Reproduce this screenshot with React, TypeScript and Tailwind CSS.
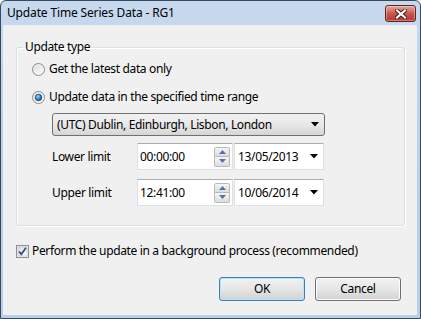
import React from "react";

const font = { fontFamily: '"Noto Sans", "Open Sans", Arial, sans-serif' };

function Radio({ checked }: { checked?: boolean }) {
  return (
    <svg width="13" height="13" viewBox="0 0 13 13" className="shrink-0">
      <defs>
        <linearGradient id={checked ? "rg-on" : "rg-off"} x1="0" y1="0" x2="1" y2="1">
          <stop offset="0" stopColor="#d9d9d9" />
          <stop offset="1" stopColor="#ffffff" />
        </linearGradient>
        <radialGradient id="dot" cx="0.4" cy="0.35" r="0.7">
          <stop offset="0" stopColor="#9fd5f5" />
          <stop offset="0.6" stopColor="#2b7fc4" />
          <stop offset="1" stopColor="#0e4a86" />
        </radialGradient>
      </defs>
      <circle cx="6.5" cy="6.5" r="6" fill={`url(#${checked ? "rg-on" : "rg-off"})`} stroke="#8a8a8a" />
      <circle cx="6.5" cy="6.5" r="4.5" fill="none" stroke="#f4f4f4" />
      {checked && <circle cx="6.5" cy="6.5" r="3.3" fill="url(#dot)" stroke="#1b3f6a" strokeWidth="0.7" />}
    </svg>
  );
}

function Arrow() {
  return (
    <svg width="8" height="5" viewBox="0 0 8 5" className="shrink-0">
      <path d="M0 0 H8 L4 4.5 Z" fill="#000" />
    </svg>
  );
}

function Spinner() {
  return (
    <div className="flex flex-col w-[16px] mr-[2px]">
      <div className="h-[10px] border border-[#b9b9b9] bg-gradient-to-b from-[#f6f6f6] to-[#dcdcdc] flex items-center justify-center rounded-t-[2px]">
        <svg width="7" height="4" viewBox="0 0 7 4">
          <path d="M0 4 L3.5 0 L7 4 Z" fill="#5573a8" />
        </svg>
      </div>
      <div className="h-[10px] border border-t-0 border-[#b9b9b9] bg-gradient-to-b from-[#f6f6f6] to-[#dcdcdc] flex items-center justify-center rounded-b-[2px]">
        <svg width="7" height="4" viewBox="0 0 7 4">
          <path d="M0 0 L7 0 L3.5 4 Z" fill="#5573a8" />
        </svg>
      </div>
    </div>
  );
}

function LimitRow({ label, time, date, className }: { label: string; time: string; date: string; className?: string }) {
  return (
    <div className={"flex items-center h-[27px] " + (className ?? "")}>
      <div className="w-[85px] ml-[20px]">{label}</div>
      <div className="w-[96px] h-full bg-white border border-[#dde1e6] border-t-[#abadb3] flex items-center justify-between pl-[2px]">
        <span>{time}</span>
        <Spinner />
      </div>
      <div className="w-[90px] h-full ml-[1px] bg-white border border-[#dde1e6] border-t-[#abadb3] flex items-center justify-between pl-[3px] pr-[5px]">
        <span>{date}</span>
        <Arrow />
      </div>
    </div>
  );
}

export default function App() {
  return (
    <div
      className="w-[421px] h-[319px] flex flex-col rounded-t-[6px] border border-[#3a4a5e] bg-gradient-to-b from-[#c6d9ef] via-[#b9d0ea] to-[#b7cfea] text-[12px] tracking-[-0.35px] text-black"
      style={font}
    >
      <div className="h-[24px] flex items-start justify-between pl-[6px] pr-[4px]">
        <span className="mt-[4px] text-[12px] leading-[16px] tracking-[-0.15px]">Update Time Series Data - RG1</span>
        <div className="mt-[4px] w-[31px] h-[17px] rounded-[3px] border border-[#5e2424] bg-gradient-to-b from-[#e8a89e] via-[#c9574a] to-[#b5382b] flex items-center justify-center shadow-[inset_0_0_0_1px_rgba(255,255,255,0.35)]">
          <svg width="12" height="10" viewBox="0 0 12 10">
            <path d="M2 1.5 L10 8.5 M10 1.5 L2 8.5" stroke="#3d1a1a" strokeWidth="4" strokeLinecap="square" />
            <path d="M2 1.5 L10 8.5 M10 1.5 L2 8.5" stroke="#ffffff" strokeWidth="2.2" strokeLinecap="square" />
          </svg>
        </div>
      </div>

      <div className="flex-1 ml-[2px] mr-[3px] mb-[3px] bg-[#f0f0f0] flex flex-col pt-[14px]">
        <fieldset className="ml-[13px] w-[389px] h-[187px] border border-[#d5dfe5] rounded-[3px] shadow-[inset_1px_1px_0_#fff,1px_1px_0_#fff] pl-[15px] flex flex-col">
          <legend className="-ml-[9px] px-[2px] leading-[16px]">Update type</legend>
          <div className="flex items-center gap-[4px] h-[16px] mt-[6px]">
            <Radio />
            <span>Get the latest data only</span>
          </div>
          <div className="flex items-center gap-[4px] h-[16px] mt-[12px]">
            <Radio checked />
            <span>Update data in the specified time range</span>
          </div>
          <div className="ml-[20px] mt-[8px] w-[273px] h-[23px] rounded-[3px] border border-[#707070] bg-gradient-to-b from-[#f2f2f2] via-[#e8e8e8] to-[#d6d6d6] flex items-center justify-between pl-[4px] pr-[5px]">
            <span>(UTC) Dublin, Edinburgh, Lisbon, London</span>
            <Arrow />
          </div>
          <LimitRow className="mt-[7px]" label="Lower limit" time="00:00:00" date="13/05/2013" />
          <LimitRow className="mt-[9px]" label="Upper limit" time="12:41:00" date="10/06/2014" />
        </fieldset>

        <div className="flex items-center gap-[3px] ml-[13px] mt-[17px] h-[16px]">
          <svg width="13" height="13" viewBox="0 0 13 13" className="shrink-0">
            <defs>
              <linearGradient id="cb" x1="0" y1="0" x2="1" y2="1">
                <stop offset="0" stopColor="#dcdcdc" />
                <stop offset="1" stopColor="#ffffff" />
              </linearGradient>
            </defs>
            <rect x="0.5" y="0.5" width="12" height="12" fill="#f4f4f4" stroke="#8e8f8f" />
            <rect x="2" y="2" width="9" height="9" fill="url(#cb)" stroke="#b9b9b9" strokeWidth="0.6" />
            <path d="M3 6.5 L5.3 9.2 L10 2.8" fill="none" stroke="#2f4f86" strokeWidth="1.8" />
          </svg>
          <span>Perform the update in a background process (recommended)</span>
        </div>

        <div className="flex justify-end gap-[10px] mr-[16px] mt-[18px]">
          <button className="w-[86px] h-[24px] rounded-[3px] border border-[#3c7fb1] bg-gradient-to-b from-[#f2f2f2] via-[#e6e6e6] to-[#d2d2d2] shadow-[inset_0_0_0_1px_#b6e4fb]">
            OK
          </button>
          <button className="w-[86px] h-[24px] rounded-[3px] border border-[#707070] bg-gradient-to-b from-[#f2f2f2] via-[#e6e6e6] to-[#d2d2d2] shadow-[inset_0_0_0_1px_#fcfcfc]">
            Cancel
          </button>
        </div>
      </div>
    </div>
  );
}
